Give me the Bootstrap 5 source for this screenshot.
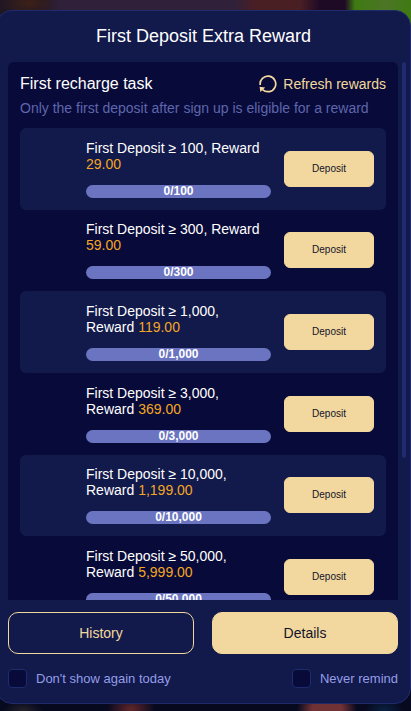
<!DOCTYPE html>
<html lang="en">
<head>
<meta charset="utf-8">
<meta name="viewport" content="width=device-width, initial-scale=1">
<title>First Deposit Extra Reward</title>
<link rel="stylesheet" href="https://cdn.jsdelivr.net/npm/bootstrap@5.3.0/dist/css/bootstrap.min.css">
<style>
  :root { --panel: #12194b; --deep: #080a39; --line: #1f2b6d; --gold: #f2d89e; --lilac: #6a74c0; }
  body {
    font: 14px/16px "Liberation Sans", Arial, sans-serif; color: #fff; padding: 10px 0 7px;
    background:
      radial-gradient(ellipse 28px 14px at 29px 3px, #3d2018, transparent),
      linear-gradient(90deg, #211723 0, #211723 40px, #30203a 60px, #30203a 235px, #4a1f24 255px, #4a1f24 300px, #1e0a25 320px, #1e0a25 345px, #3f7a12 355px, #4c7526 385px, #3f7a12 411px) top / 100% 30px no-repeat,
      radial-gradient(ellipse 24px 16px at 131px calc(100% - 2px), #612629, transparent),
      radial-gradient(ellipse 30px 18px at 327px calc(100% - 2px), #713235, #713235 50%, transparent),
      radial-gradient(ellipse 20px 10px at 23px 100%, #25232a, transparent),
      radial-gradient(ellipse 20px 14px at 384px 100%, #0a2142, transparent),
      #07091f;
  }
  .dialog-panel { margin-left: -4px; background: var(--panel); border: 1px solid var(--line); border-radius: 16px; padding-left: 11px; }
  .dialog-title { font-size: 18px; line-height: 24px; padding: 13px 11px 14px 0; }
  .scroll-row { gap: 4px; padding-right: 4px; }
  .task-pane { background: var(--deep); border-radius: 6px 6px 0 0; padding: 12px 12px 0; }
  .scroll-thumb { width: 4px; height: 396px; background: var(--line); border-radius: 2px; }
  .task-title { font-size: 16px; line-height: 20px; }
  .refresh-btn { color: var(--gold); gap: 6px; }
  .task-note { color: #5e66ad; line-height: 18px; padding: 5px 0 11px; }
  .task-list { display: grid; grid-auto-rows: 1fr; height: 490px; }
  .task-item { padding: 0 12px 0 66px; gap: 13px; border-radius: 6px; }
  .task-item:nth-child(odd) { background: var(--panel); }
  .reward { color: #f5a623; }
  .task-bar { height: 13px; margin-top: 13px; border-radius: 7px; background: var(--lilac); color: #fff; font-size: 12px; line-height: 12px; }
  .gold-btn { background: var(--gold); color: #12132b; border: 1px solid var(--gold); }
  .deposit-btn { width: 90px; height: 36px; border-radius: 6px; font-size: 10px; }
  .dialog-foot { padding: 12px 12px 15px 0; }
  .foot-btns { gap: 18px; }
  .foot-btn { height: 42px; border-radius: 10px; }
  .line-btn { background: transparent; color: var(--gold); border: 1px solid var(--gold); }
  .foot-checks { margin-top: 15px; color: #949ee8; font-size: 13px; }
  .foot-checks label { gap: 9px; }
  .foot-checks input { appearance: none; width: 19px; height: 19px; margin: 0; background: var(--deep); border: 1px solid var(--line); border-radius: 4px; }
  .foot-checks input:checked { background: var(--lilac); }
</style>
</head>
<body class="vh-100 overflow-hidden d-flex flex-column">
<main class="dialog-panel flex-fill d-flex flex-column overflow-hidden">
  <h1 class="dialog-title text-center fw-normal m-0">First Deposit Extra Reward</h1>
  <div class="scroll-row d-flex flex-fill overflow-hidden">
    <section class="task-pane flex-fill overflow-hidden">
      <div class="d-flex justify-content-between align-items-center">
        <h2 class="task-title fw-normal m-0">First recharge task</h2>
        <button type="button" class="refresh-btn border-0 bg-transparent p-0 d-flex align-items-center">
          <svg width="18" height="18" viewBox="0 0 18 18" fill="none" stroke="currentColor" stroke-width="1.7" aria-hidden="true">
            <path d="M1.2 10A7.8 7.8 0 1 1 3.6 14.6"/>
            <path d="M.6 11.8L6.2 12.6L1.4 17Z" fill="currentColor" stroke="none"/>
          </svg>
          Refresh rewards
        </button>
      </div>
      <p class="task-note text-nowrap m-0">Only the first deposit after sign up is eligible for a reward</p>
      <ul class="task-list list-unstyled m-0">
        <li class="task-item d-flex align-items-center"><div class="flex-fill"><div>First Deposit ≥ 100, Reward <span class="reward">29.00</span></div><div class="task-bar text-center fw-bold">0/100</div></div><button type="button" class="gold-btn deposit-btn flex-shrink-0">Deposit</button></li>
        <li class="task-item d-flex align-items-center"><div class="flex-fill"><div>First Deposit ≥ 300, Reward <span class="reward">59.00</span></div><div class="task-bar text-center fw-bold">0/300</div></div><button type="button" class="gold-btn deposit-btn flex-shrink-0">Deposit</button></li>
        <li class="task-item d-flex align-items-center"><div class="flex-fill"><div>First Deposit ≥ 1,000, Reward <span class="reward">119.00</span></div><div class="task-bar text-center fw-bold">0/1,000</div></div><button type="button" class="gold-btn deposit-btn flex-shrink-0">Deposit</button></li>
        <li class="task-item d-flex align-items-center"><div class="flex-fill"><div>First Deposit ≥ 3,000, Reward <span class="reward">369.00</span></div><div class="task-bar text-center fw-bold">0/3,000</div></div><button type="button" class="gold-btn deposit-btn flex-shrink-0">Deposit</button></li>
        <li class="task-item d-flex align-items-center"><div class="flex-fill"><div>First Deposit ≥ 10,000, Reward <span class="reward">1,199.00</span></div><div class="task-bar text-center fw-bold">0/10,000</div></div><button type="button" class="gold-btn deposit-btn flex-shrink-0">Deposit</button></li>
        <li class="task-item d-flex align-items-center"><div class="flex-fill"><div>First Deposit ≥ 50,000, Reward <span class="reward">5,999.00</span></div><div class="task-bar text-center fw-bold">0/50,000</div></div><button type="button" class="gold-btn deposit-btn flex-shrink-0">Deposit</button></li>
      </ul>
    </section>
    <div class="scroll-thumb flex-shrink-0"></div>
  </div>
  <footer class="dialog-foot">
    <div class="foot-btns d-flex">
      <button type="button" class="line-btn foot-btn w-50">History</button>
      <button type="button" class="gold-btn foot-btn w-50">Details</button>
    </div>
    <div class="foot-checks d-flex justify-content-between">
      <label class="d-flex align-items-center" for="skip-today"><input type="checkbox" id="skip-today">Don't show again today</label>
      <label class="d-flex align-items-center" for="never-remind"><input type="checkbox" id="never-remind">Never remind</label>
    </div>
  </footer>
</main>
<script src="https://cdn.jsdelivr.net/npm/bootstrap@5.3.0/dist/js/bootstrap.bundle.min.js"></script>
</body>
</html>
